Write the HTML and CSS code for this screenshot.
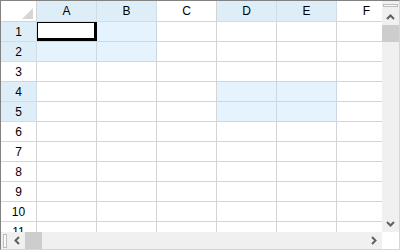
FILE: index.html
```html
<!DOCTYPE html>
<html lang="en">
<head>
    <meta charset="UTF-8">
    <meta name="viewport" content="width=device-width, initial-scale=1.0">
    <title>Spreadsheet</title>
    <link rel="stylesheet" href="styles.css">
</head>
<body>
    <div class="sheet">
        <!-- Cell grid -->
        <div class="cells">
            <div class="cell corner"><span class="tri"></span></div>
            <div class="cell col-head sel">A</div>
            <div class="cell col-head sel">B</div>
            <div class="cell col-head">C</div>
            <div class="cell col-head sel">D</div>
            <div class="cell col-head sel">E</div>
            <div class="cell col-head">F</div>

            <div class="cell row-head sel">1</div>
            <div class="cell active"></div>
            <div class="cell sel"></div>
            <div class="cell"></div>
            <div class="cell"></div>
            <div class="cell"></div>
            <div class="cell"></div>

            <div class="cell row-head sel">2</div>
            <div class="cell sel"></div>
            <div class="cell sel"></div>
            <div class="cell"></div>
            <div class="cell"></div>
            <div class="cell"></div>
            <div class="cell"></div>

            <div class="cell row-head">3</div>
            <div class="cell"></div>
            <div class="cell"></div>
            <div class="cell"></div>
            <div class="cell"></div>
            <div class="cell"></div>
            <div class="cell"></div>

            <div class="cell row-head sel">4</div>
            <div class="cell"></div>
            <div class="cell"></div>
            <div class="cell"></div>
            <div class="cell sel"></div>
            <div class="cell sel"></div>
            <div class="cell"></div>

            <div class="cell row-head sel">5</div>
            <div class="cell"></div>
            <div class="cell"></div>
            <div class="cell"></div>
            <div class="cell sel"></div>
            <div class="cell sel"></div>
            <div class="cell"></div>

            <div class="cell row-head">6</div>
            <div class="cell"></div>
            <div class="cell"></div>
            <div class="cell"></div>
            <div class="cell"></div>
            <div class="cell"></div>
            <div class="cell"></div>

            <div class="cell row-head">7</div>
            <div class="cell"></div>
            <div class="cell"></div>
            <div class="cell"></div>
            <div class="cell"></div>
            <div class="cell"></div>
            <div class="cell"></div>

            <div class="cell row-head">8</div>
            <div class="cell"></div>
            <div class="cell"></div>
            <div class="cell"></div>
            <div class="cell"></div>
            <div class="cell"></div>
            <div class="cell"></div>

            <div class="cell row-head">9</div>
            <div class="cell"></div>
            <div class="cell"></div>
            <div class="cell"></div>
            <div class="cell"></div>
            <div class="cell"></div>
            <div class="cell"></div>

            <div class="cell row-head">10</div>
            <div class="cell"></div>
            <div class="cell"></div>
            <div class="cell"></div>
            <div class="cell"></div>
            <div class="cell"></div>
            <div class="cell"></div>

            <div class="cell row-head">11</div>
            <div class="cell"></div>
            <div class="cell"></div>
            <div class="cell"></div>
            <div class="cell"></div>
            <div class="cell"></div>
            <div class="cell"></div>
        </div>

        <!-- Vertical scrollbar -->
        <div class="vscroll">
            <div class="split"><span></span></div>
            <div class="btn">
                <svg width="9" height="6" viewBox="0 0 9 6"><polyline points="1,5 4.5,1.5 8,5" fill="none" stroke="#606060" stroke-width="2"/></svg>
            </div>
            <div class="thumb"></div>
            <div class="track"></div>
            <div class="btn">
                <svg width="9" height="6" viewBox="0 0 9 6"><polyline points="1,1 4.5,4.5 8,1" fill="none" stroke="#606060" stroke-width="2"/></svg>
            </div>
        </div>

        <!-- Horizontal scrollbar -->
        <div class="hscroll">
            <div class="split"><span></span></div>
            <div class="btn">
                <svg width="6" height="9" viewBox="0 0 6 9"><polyline points="5,1 1.5,4.5 5,8" fill="none" stroke="#606060" stroke-width="2"/></svg>
            </div>
            <div class="thumb"></div>
            <div class="track"></div>
            <div class="btn">
                <svg width="6" height="9" viewBox="0 0 6 9"><polyline points="1,1 4.5,4.5 1,8" fill="none" stroke="#606060" stroke-width="2"/></svg>
            </div>
        </div>

        <div class="box-corner"></div>
    </div>
</body>
</html>
```

FILE: styles.css
```css
body {
    margin: 0;
    font-family: "Liberation Sans", Arial, sans-serif;
    background: white;
}
.sheet {
    width: 400px;
    height: 250px;
    box-sizing: border-box;
    border: 1px solid #828282;
    border-right-color: #d6d6d6;
    border-bottom-color: #d6d6d6;
    display: grid;
    grid-template-columns: 381px 17px;
    grid-template-rows: 231px 17px;
}
.cells {
    display: grid;
    grid-template-columns: 36px repeat(6, 60px);
    grid-template-rows: 21px repeat(11, 20px);
    overflow: hidden;
}
.cell {
    box-sizing: border-box;
    border-right: 1px solid #d4d4d4;
    border-bottom: 1px solid #d4d4d4;
    background: white;
    font-size: 12px;
    color: black;
    display: flex;
    align-items: center;
    justify-content: center;
    position: relative;
}
.cell.sel {
    background: #e5f3ff;
    border-color: #cbd7e2;
}
.col-head.sel, .row-head.sel {
    background: #ddeef8;
    border-color: #cfdde8;
}
.corner {
    justify-content: flex-end;
    align-items: flex-end;
    padding: 0 3px 2px 0;
}
.tri {
    width: 0;
    height: 0;
    border-left: 11px solid transparent;
    border-bottom: 11px solid #d6d6d6;
}
.active::after {
    content: "";
    position: absolute;
    top: 0;
    left: 0;
    right: -1px;
    bottom: 0;
    box-sizing: border-box;
    border-style: solid;
    border-color: black;
    border-width: 1px 3px 3px 1px;
}
.vscroll, .hscroll {
    background: #f0f0f0;
    display: flex;
}
.vscroll {
    flex-direction: column;
}
.btn {
    width: 17px;
    height: 17px;
    display: flex;
    align-items: center;
    justify-content: center;
    flex-shrink: 0;
}
.thumb {
    width: 17px;
    height: 17px;
    background: #cdcdcd;
    flex-shrink: 0;
}
.track {
    flex: 1;
}
.split {
    flex-shrink: 0;
    display: flex;
}
.vscroll .split {
    height: 7px;
    padding: 3px 1px 0 1px;
    box-sizing: border-box;
}
.hscroll .split {
    width: 7px;
    padding: 2px 0 1px 2px;
    box-sizing: border-box;
}
.split span {
    flex: 1;
    box-sizing: border-box;
    border: 1px solid #bcbcbc;
    background: #fafafa;
}
.vscroll .split span {
    height: 3px;
    flex: 1;
}
.hscroll .split span {
    width: 4px;
    flex: none;
}
.box-corner {
    background: white;
}
```
